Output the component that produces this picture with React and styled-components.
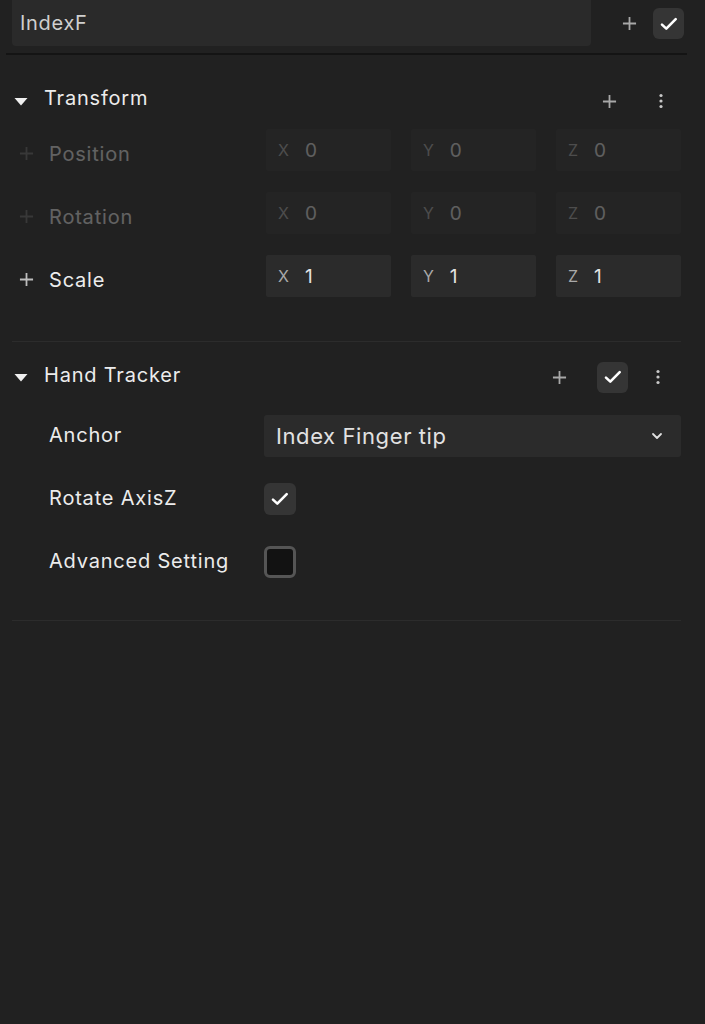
import styled, { createGlobalStyle } from "styled-components";

const GlobalStyle = createGlobalStyle`
  html, body {
    margin: 0;
    padding: 0;
    background: #212121;
  }
  body {
    font-family: Inter, "Noto Sans", "Liberation Sans", sans-serif;
    color: #e4e4e4;
  }
`;

const PlusIcon = ({ size = 15 }) => (
  <svg width={size} height={size} viewBox="0 0 16 16" fill="none">
    <path d="M8 1v14M1 8h14" stroke="currentColor" strokeWidth="1.9" />
  </svg>
);

const CheckIcon = () => (
  <svg width="18" height="14" viewBox="0 0 18 14" fill="none">
    <path
      d="M2 7.6l4.3 4 9.4-9.4"
      stroke="#ffffff"
      strokeWidth="2.6"
      strokeLinecap="round"
      strokeLinejoin="round"
    />
  </svg>
);

const KebabIcon = () => (
  <svg width="4" height="16" viewBox="0 0 4 16" fill="#c8c8c8">
    <circle cx="2" cy="2.5" r="1.6" />
    <circle cx="2" cy="8" r="1.6" />
    <circle cx="2" cy="13.5" r="1.6" />
  </svg>
);

const Caret = () => (
  <svg width="14" height="9" viewBox="0 0 14 9">
    <path d="M0.5 1h13L7 8.5z" fill="#f0f0f0" />
  </svg>
);

const Chevron = () => (
  <svg width="12" height="8" viewBox="0 0 12 8" fill="none">
    <path
      d="M2 2l4 4 4-4"
      stroke="#e0e0e0"
      strokeWidth="1.8"
      strokeLinecap="round"
      strokeLinejoin="round"
    />
  </svg>
);

const rows = [
  { label: "Position", values: ["0", "0", "0"], dim: true },
  { label: "Rotation", values: ["0", "0", "0"], dim: true },
  { label: "Scale", values: ["1", "1", "1"], dim: false },
];

export default function App() {
  return (
    <>
      <GlobalStyle />
      <Panel>
        <NameBar>
          <NameInput>IndexF</NameInput>
          <IconSlot>
            <PlusIcon />
          </IconSlot>
          <CheckButton>
            <CheckIcon />
          </CheckButton>
        </NameBar>
        <Divider $dark />

        <Section $top={30} $bottom={44}>
          <SectionHeader>
            <Caret />
            <SectionTitle $lift={6}>Transform</SectionTitle>
            <HeaderActions $gap={28} $right={12}>
              <IconSlot>
                <PlusIcon />
              </IconSlot>
              <IconSlot $narrow>
                <KebabIcon />
              </IconSlot>
            </HeaderActions>
          </SectionHeader>

          <PropList>
            {rows.map((row) => (
              <VectorRow key={row.label} $dim={row.dim}>
                <RowLabel>
                  <RowPlus $dim={row.dim}>
                    <PlusIcon size={15} />
                  </RowPlus>
                  <LabelText>{row.label}</LabelText>
                </RowLabel>
                <Fields>
                  {["X", "Y", "Z"].map((axis, i) => (
                    <AxisField key={axis}>
                      <AxisName>{axis}</AxisName>
                      <AxisValue>{row.values[i]}</AxisValue>
                    </AxisField>
                  ))}
                </Fields>
              </VectorRow>
            ))}
          </PropList>
        </Section>
        <Divider />

        <Section $top={19} $bottom={37}>
          <SectionHeader>
            <Caret />
            <SectionTitle $lift={4}>Hand Tracker</SectionTitle>
            <HeaderActions $gap={22} $right={15}>
              <IconSlot>
                <PlusIcon />
              </IconSlot>
              <CheckButton $flat>
                <CheckIcon />
              </CheckButton>
              <IconSlot $narrow>
                <KebabIcon />
              </IconSlot>
            </HeaderActions>
          </SectionHeader>

          <TrackerList>
            <TrackerRow>
              <TrackerLabel>Anchor</TrackerLabel>
              <Select>
                <span>Index Finger tip</span>
                <Chevron />
              </Select>
            </TrackerRow>
            <TrackerRow>
              <TrackerLabel>Rotate AxisZ</TrackerLabel>
              <Checkbox $checked>
                <CheckIcon />
              </Checkbox>
            </TrackerRow>
            <TrackerRow>
              <TrackerLabel>Advanced Setting</TrackerLabel>
              <Checkbox />
            </TrackerRow>
          </TrackerList>
        </Section>
        <Divider />
      </Panel>
    </>
  );
}

const Panel = styled.div`
  width: 705px;
  min-height: 1024px;
  background: #212121;
  box-sizing: border-box;
  padding: 0 24px 0 12px;
`;

const NameBar = styled.div`
  display: flex;
  align-items: center;
  height: 47px;
  margin-right: -3px;
`;

const NameInput = styled.div`
  width: 579px;
  height: 47px;
  box-sizing: border-box;
  background: #2a2a2a;
  border-radius: 0 0 4px 4px;
  padding: 0 8px;
  display: flex;
  align-items: center;
  font-size: 20px;
  letter-spacing: 0.7px;
  color: #cfcfcf;
  margin-top: -2px;
  margin-right: 22px;
`;

const IconSlot = styled.div`
  width: ${(p) => (p.$narrow ? "16px" : "32px")};
  display: flex;
  align-items: center;
  justify-content: center;
  color: #a8a8a8;
  flex-shrink: 0;
`;

const RowPlus = styled.div`
  width: 16px;
  margin-left: 6px;
  display: flex;
  align-items: center;
  justify-content: center;
  color: ${(p) => (p.$dim ? "#6a6a6a" : "#bdbdbd")};
  margin-top: -2px;
`;

const CheckButton = styled.div`
  width: 31px;
  height: 31px;
  border-radius: 6px;
  background: #353535;
  display: flex;
  align-items: center;
  justify-content: center;
  margin-left: ${(p) => (p.$flat ? "0" : "8px")};
  flex-shrink: 0;
`;

const Divider = styled.div`
  height: ${(p) => (p.$dark ? "2px" : "1px")};
  background: ${(p) => (p.$dark ? "#141414" : "#2c2c2c")};
  margin: ${(p) => (p.$dark ? "6px -6px 0 -6px" : "0")};
`;

const Section = styled.div`
  padding-top: ${(p) => p.$top}px;
  padding-bottom: ${(p) => p.$bottom}px;
`;

const SectionHeader = styled.div`
  display: flex;
  align-items: center;
  height: 32px;
  gap: 16px;
  padding-left: 2px;
`;

const SectionTitle = styled.div`
  font-size: 20px;
  letter-spacing: 0.8px;
  color: #ececec;
  flex: 1;
  margin-top: -${(p) => p.$lift}px;
`;

const HeaderActions = styled.div`
  display: flex;
  align-items: center;
  gap: ${(p) => p.$gap}px;
  padding-right: ${(p) => p.$right}px;
`;

const PropList = styled.div`
  display: flex;
  flex-direction: column;
  gap: 21px;
  margin-top: 12px;
`;

const VectorRow = styled.div`
  display: grid;
  grid-template-columns: 254px 1fr;
  align-items: center;
  height: 42px;
  opacity: ${(p) => (p.$dim ? 0.32 : 1)};
`;

const RowLabel = styled.div`
  display: flex;
  align-items: center;
  gap: 15px;
  padding-top: 8px;
`;

const LabelText = styled.div`
  font-size: 20px;
  letter-spacing: 0.8px;
  color: #ececec;
`;

const Fields = styled.div`
  display: grid;
  grid-template-columns: repeat(3, 1fr);
  gap: 20px;
  height: 42px;
`;

const AxisField = styled.div`
  background: #2b2b2b;
  border-radius: 2px;
  display: flex;
  align-items: center;
  padding: 0 12px;
  gap: 16px;
`;

const AxisName = styled.span`
  font-size: 16px;
  color: #a9a9a9;
`;

const AxisValue = styled.span`
  font-size: 19px;
  color: #e2e2e2;
`;

const TrackerList = styled.div`
  display: flex;
  flex-direction: column;
  gap: 21px;
  margin-top: 22px;
`;

const TrackerRow = styled.div`
  display: grid;
  grid-template-columns: 252px 1fr;
  align-items: center;
  height: 42px;
`;

const TrackerLabel = styled.div`
  font-size: 20px;
  letter-spacing: 0.8px;
  color: #ececec;
  padding-left: 37px;
  margin-top: -3px;
`;

const Select = styled.div`
  height: 42px;
  background: #2b2b2b;
  border-radius: 3px;
  display: flex;
  align-items: center;
  justify-content: space-between;
  padding: 0 18px 0 12px;
  font-size: 22px;
  letter-spacing: 0.6px;
  color: #e2e2e2;
`;

const Checkbox = styled.div`
  width: 32px;
  height: 32px;
  box-sizing: border-box;
  border-radius: 6px;
  background: ${(p) => (p.$checked ? "#353535" : "#121212")};
  border: ${(p) => (p.$checked ? "none" : "3px solid #555555")};
  display: flex;
  align-items: center;
  justify-content: center;
`;
